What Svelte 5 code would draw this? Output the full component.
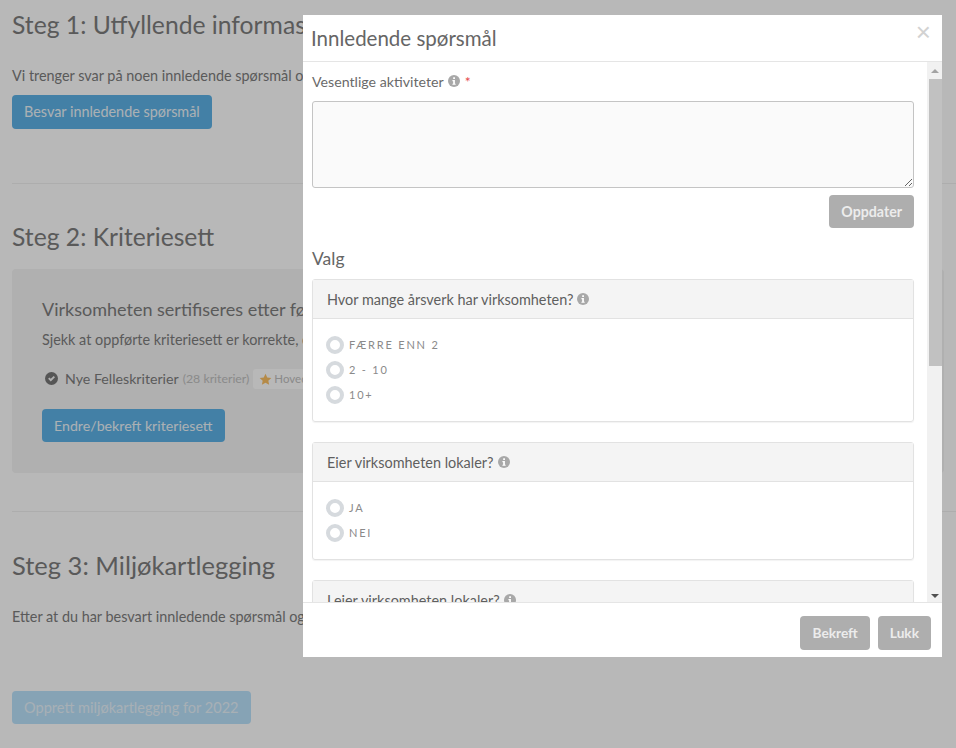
<script>
  const questions = [
    { title: 'Hvor mange årsverk har virksomheten?', options: ['Færre enn 2', '2 - 10', '10+'] },
    { title: 'Eier virksomheten lokaler?', options: ['Ja', 'Nei'] }
  ];
</script>

{#snippet info(size)}
  <svg class="info" width={size} height={size} viewBox="0 0 16 16" aria-hidden="true">
    <circle cx="8" cy="8" r="8" fill="currentColor" />
    <rect x="6.9" y="3" width="2.4" height="2.3" rx=".4" fill="#fff" />
    <path d="M5.9 6.6h3.3v5h1v1.5H5.9v-1.5h1v-3.4h-1z" fill="#fff" />
  </svg>
{/snippet}

<div class="page">
  <section class="step first">
    <h2>Steg 1: Utfyllende informasjon</h2>
    <p>Vi trenger svar på noen innledende spørsmål og utfyllende informasjon om virksomheten din før du kan gå videre.</p>
    <button class="btn primary">Besvar innledende spørsmål</button>
  </section>
  <hr class="sep one" />
  <section class="step second">
    <h2>Steg 2: Kriteriesett</h2>
    <div class="well">
      <h3>Virksomheten sertifiseres etter følgende kriteriesett</h3>
      <p class="check">Sjekk at oppførte kriteriesett er korrekte, og bekreft eller endre valget ditt her.</p>
      <div class="crit">
        <svg class="ok" width="13" height="13" viewBox="0 0 16 16" aria-hidden="true">
          <circle cx="8" cy="8" r="8" fill="currentColor" />
          <path d="M3.8 8.3l1.6-1.6 1.7 1.7 3.6-3.6 1.6 1.6-5.2 5.2z" fill="#f4f4f4" />
        </svg>
        <span class="name">Nye Felleskriterier</span>
        <span class="count">(28 kriterier)</span>
        <span class="tag">
          <svg class="star" width="13" height="13" viewBox="0 0 24 24" aria-hidden="true">
            <path d="M12 1.5l3.2 6.9 7.6.9-5.6 5.1 1.5 7.5L12 18l-6.700 3.900 1.500-7.500L1.200 9.300l7.600-.9z" fill="currentColor" />
          </svg>
          Hovedkriteriesett
        </span>
      </div>
      <button class="btn primary">Endre/bekreft kriteriesett</button>
    </div>
  </section>
  <hr class="sep two" />
  <section class="step third">
    <h2>Steg 3: Miljøkartlegging</h2>
    <p class="long">Etter at du har besvart innledende spørsmål og bekreftet kriteriesett kan du opprette en miljøkartlegging for inneværende år, og du kan alltid se.</p>
    <button class="btn faded">Opprett miljøkartlegging for 2022</button>
  </section>
</div>

<div class="backdrop"></div>

<div class="modal">
  <header>
    <h4>Innledende spørsmål</h4>
    <span class="close">×</span>
  </header>
  <div class="middle">
    <div class="body">
      <div class="label">Vesentlige aktiviteter {@render info(12)} <span class="req">*</span></div>
      <textarea></textarea>
      <div class="update"><button class="btn grey">Oppdater</button></div>
      <div class="valg">Valg</div>
      {#each questions as q}
        <div class="card">
          <div class="card-h">{q.title} {@render info(12)}</div>
          <div class="card-b">
            {#each q.options as o}
              <div class="opt"><span class="radio"></span><span class="opt-t">{o}</span></div>
            {/each}
          </div>
        </div>
      {/each}
      <div class="card">
        <div class="card-h">Leier virksomheten lokaler? {@render info(12)}</div>
      </div>
    </div>
    <div class="scroll">
      <div class="arrow"><span class="up"></span></div>
      <div class="track"><div class="thumb"></div></div>
      <div class="arrow"><span class="down"></span></div>
    </div>
  </div>
  <footer>
    <button class="btn grey">Bekreft</button>
    <button class="btn grey">Lukk</button>
  </footer>
</div>

<style>
  :global(body) {
    margin: 0;
    background: #fff;
    font-family: Lato, "Open Sans", sans-serif;
    color: #5a5a5a;
    overflow: hidden;
  }
  * { box-sizing: border-box; }
  .page {
    height: 748px;
    padding: 0 12px;
    overflow: hidden;
    white-space: nowrap;
  }
  h2 {
    margin: 0;
    font-size: 24.7px;
    line-height: 30px;
    font-weight: 400;
    color: #7d7d7d;
  }
  .third h2 { font-size: 25.5px; }
  .step p {
    margin: 0;
    font-size: 14.4px;
    line-height: 20px;
    color: #7d7d7d;
  }
  .first { padding-top: 10px; }
  .first p { margin-top: 26px; }
  .first .btn { margin-top: 9px; }
  .sep { border: 0; border-top: 1px solid #f0f0f0; margin: 0 -12px 0 0; }
  .sep.one { margin-top: 54px; }
  .second { padding-top: 38px; }
  .well {
    margin-top: 17px;
    height: 204px;
    background: #f4f4f4;
    border-radius: 4px;
    padding: 28px 30px;
  }
  h3 {
    margin: 0;
    font-size: 18px;
    line-height: 24px;
    font-weight: 400;
    color: #7d7d7d;
  }
  .well .check { margin-top: 9px; }
  .crit {
    display: flex;
    align-items: center;
    gap: 4px;
    margin-top: 18px;
    font-size: 14.2px;
    line-height: 20px;
  }
  .ok { color: #777; margin: 0 3px 0 3px; }
  .name { color: #7d7d7d; }
  .count { color: #c0c0c0; font-size: 12.3px; }
  .tag {
    display: flex;
    align-items: center;
    gap: 2px;
    margin-top: 1px;
    background: #fff;
    border-radius: 3px;
    padding: 0 6px;
    font-size: 11.5px;
    line-height: 20px;
    color: #c0c0c0;
  }
  .star { color: #fbbf63; flex: none; }
  .well .btn { margin-top: 20px; height: 33px; line-height: 33px; font-size: 14.2px; }
  .sep.two { margin-top: 38px; }
  .third { padding-top: 38px; }
  .third p { margin-top: 27px; }
  .third .btn { margin-top: 64px; height: 33px; line-height: 33px; font-size: 14.55px; }

  .btn {
    display: inline-block;
    height: 34px;
    padding: 0 12px;
    border: 0;
    border-radius: 4px;
    font: inherit;
    font-size: 14.4px;
    line-height: 34px;
    white-space: nowrap;
  }
  .primary { background: #5db2e6; color: #eef5fa; }
  .faded { background: #bae2fb; color: #e8f4fb; }
  .grey {
    background: #aeaeae;
    color: #ececec;
    font-weight: 700;
    font-size: 13.7px;
  }

  .backdrop {
    position: fixed;
    inset: 0;
    background: rgba(0, 0, 0, 0.28);
  }
  .modal {
    position: fixed;
    left: 303px;
    top: 15px;
    width: 639px;
    height: 642px;
    background: #fff;
    display: flex;
    flex-direction: column;
    color: #6a6a6a;
  }
  header {
    height: 47px;
    flex: none;
    border-bottom: 1px solid #e5e5e5;
    display: flex;
    align-items: center;
    justify-content: space-between;
    padding: 0 11px 0 8px;
  }
  h4 {
    margin: 0;
    font-size: 20.5px;
    font-weight: 400;
    color: #666;
  }
  .close {
    font-family: "Liberation Sans", sans-serif;
    font-size: 26px;
    color: #d2d2d2;
    line-height: 1;
    margin-top: -12px;
  }
  .middle {
    flex: 1;
    min-height: 0;
    display: flex;
  }
  .body {
    flex: 1;
    min-width: 0;
    overflow: hidden;
    padding: 9px 13px 0 9px;
    font-size: 14.2px;
  }
  .label {
    display: flex;
    align-items: center;
    gap: 4px;
    height: 20px;
  }
  .info { color: #a8a8a8; flex: none; }
  .req { color: #e5484d; margin-left: 1px; }
  textarea {
    display: block;
    width: 100%;
    height: 87px;
    margin-top: 10px;
    background: #fafafa;
    border: 1px solid #c4c4c4;
    border-radius: 3px;
    resize: both;
  }
  .update { display: flex; justify-content: flex-end; margin-top: 7px; }
  .update .btn { height: 33px; line-height: 33px; font-size: 14.2px; }
  .valg {
    font-size: 17.5px;
    line-height: 24px;
    margin-top: 19px;
    color: #666;
  }
  .card {
    margin-top: 8px;
    border: 1px solid #e2e2e2;
    border-radius: 3px;
    box-shadow: 0 1px 1px rgba(0, 0, 0, 0.05);
  }
  .card + .card { margin-top: 20px; }
  .card-h {
    display: flex;
    align-items: center;
    gap: 4px;
    height: 39px;
    padding: 0 14px;
    background: #f4f4f4;
    border-bottom: 1px solid #e2e2e2;
    color: #5f5f5f;
    font-size: 14.45px;
  }
  .card-b {
    padding: 13px 13px 14px;
  }
  .opt {
    display: flex;
    align-items: center;
    gap: 5px;
    height: 25px;
  }
  .radio {
    width: 18px;
    height: 18px;
    border: 4px solid #d6dade;
    border-radius: 50%;
    flex: none;
    background: #fff;
  }
  .opt-t {
    font-size: 11px;
    letter-spacing: 1.8px;
    text-transform: uppercase;
    color: #8a8a8a;
  }
  .scroll {
    width: 15px;
    flex: none;
    display: flex;
    flex-direction: column;
    background: #f1f1f1;
  }
  .arrow {
    height: 17px;
    flex: none;
    display: flex;
    align-items: center;
    justify-content: center;
    padding-left: 1px;
  }
  .arrow:last-child { height: 12px; }
  .up, .down {
    width: 0;
    height: 0;
    border-left: 4px solid transparent;
    border-right: 4px solid transparent;
  }
  .up { border-bottom: 4px solid #a3a3a3; }
  .down { border-top: 4px solid #505050; }
  .track { flex: 1; }
  .thumb { height: 287px; margin-left: 2px; background: #c1c1c1; }
  footer {
    height: 55px;
    flex: none;
    border-top: 1px solid #e5e5e5;
    display: flex;
    justify-content: flex-end;
    gap: 8px;
    padding: 13px 11px 0 0;
  }
</style>
